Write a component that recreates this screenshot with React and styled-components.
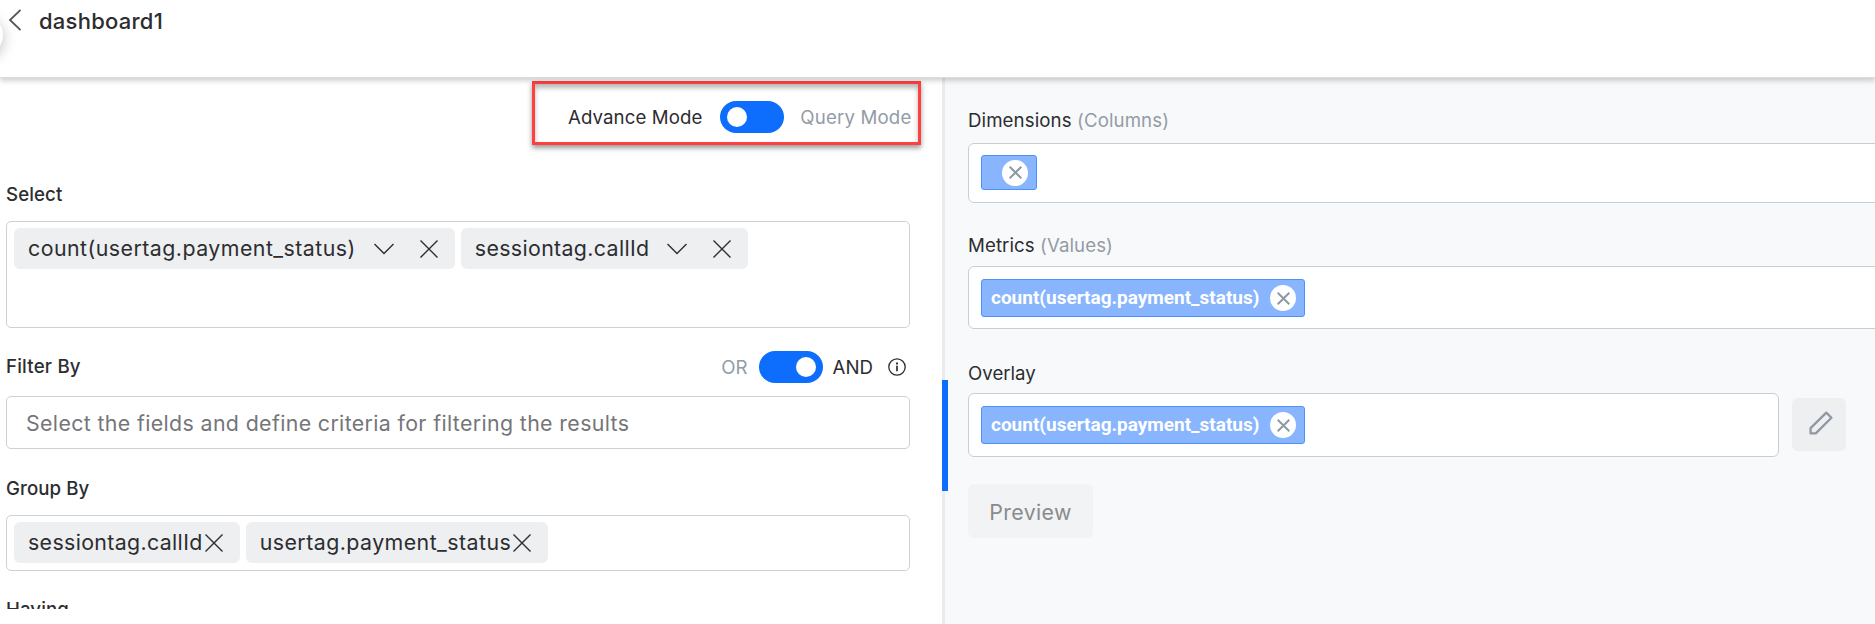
import React from "react";
import styled, { createGlobalStyle } from "styled-components";

const GlobalStyle = createGlobalStyle`
  * { box-sizing: border-box; }
  body {
    margin: 0;
    background: #fff;
    font-family: Inter, "Liberation Sans", sans-serif;
    color: #2c2d30;
    overflow: hidden;
  }
`;

const Page = styled.div`
  height: 624px;
  overflow: hidden;
  display: flex;
  flex-direction: column;
`;

const Header = styled.header`
  position: relative;
  z-index: 2;
  flex: none;
  height: 78px;
  padding: 5px 0 0 8px;
  display: flex;
  align-items: flex-start;
  gap: 18px;
  background: #fff;
  border-bottom: 1px solid #dcdcdc;
  box-shadow: 0 3px 5px rgba(0, 0, 0, 0.18);
`;

const SidebarHandle = styled.div`
  position: absolute;
  left: -37px;
  top: 15px;
  width: 40px;
  height: 40px;
  border-radius: 50%;
  background: #fff;
  box-shadow: 0 4px 14px rgba(0, 0, 0, 0.25);
`;

const Title = styled.h1`
  margin: 0;
  font-size: 22px;
  font-weight: 450;
  line-height: 32px;
  letter-spacing: 0.25px;
`;

const Body = styled.main`
  flex: 1;
  display: flex;
  min-height: 0;
`;

const QueryPanel = styled.section`
  flex: none;
  width: 942px;
  height: 531px;
  padding: 3px 32px 0 6px;
  overflow: hidden;
`;

const ModeSwitch = styled.div`
  width: 389px;
  height: 64px;
  margin: 0 -11px 0 auto;
  padding: 17px 4px 0 33px;
  display: flex;
  align-items: flex-start;
  border: 3px solid #ff4040;
  box-shadow: 0 3px 5px rgba(0, 0, 0, 0.4), inset 0 4px 5px rgba(0, 0, 0, 0.28);
`;

const Text = styled.span`
  font-size: 18.67px;
  line-height: 34px;
  letter-spacing: ${(p) => p.$spacing || 0}px;
  color: ${(p) => (p.$muted ? "#939ca5" : "inherit")};
  white-space: nowrap;
`;

const Hint = styled.span`
  color: #939ca5;
`;

const Toggle = styled.span`
  flex: none;
  display: flex;
  align-items: center;
  justify-content: ${(p) => (p.$on ? "flex-end" : "flex-start")};
  width: 64px;
  height: 32px;
  margin: ${(p) => p.$margin};
  padding: 0 7px;
  border-radius: 16px;
  background: #0d6efd;

  &::after {
    content: "";
    width: 20px;
    height: 20px;
    border-radius: 50%;
    background: #fff;
  }
`;

const FieldHead = styled.div`
  display: flex;
  align-items: center;
  height: ${(p) => p.$height || 24}px;
  margin: ${(p) => p.$margin};
`;

const Label = styled.label`
  padding-top: ${(p) => p.$drop ?? 2}px;
  font-size: 18.67px;
  font-weight: ${(p) => p.$weight || 450};
  line-height: 24px;
  letter-spacing: ${(p) => p.$spacing || 0}px;
  white-space: nowrap;
`;

const Operator = styled.div`
  display: flex;
  align-items: flex-start;
  height: 32px;
  margin-left: auto;
  padding-right: 4px;
`;

const ChipField = styled.div`
  display: flex;
  align-items: flex-start;
  gap: 6px;
  height: ${(p) => p.$height}px;
  padding: 6px 7px;
  border: 1px solid #cdd1d6;
  border-radius: 5px;
  background: #fff;
`;

const Chip = styled.span`
  display: flex;
  align-items: center;
  height: 41px;
  padding: 0 17px 0 14px;
  border-radius: 6px;
  background: #eeeff1;
  font-size: 21.33px;
  line-height: 41px;
  letter-spacing: ${(p) => p.$spacing}px;
  white-space: nowrap;
`;

const FilterInput = styled.input`
  display: block;
  width: 100%;
  height: 53px;
  padding: 0 19px;
  border: 1px solid #cdd1d6;
  border-radius: 5px;
  background: #fff;
  font: 400 21.33px Inter, "Liberation Sans", sans-serif;
  letter-spacing: 0.37px;

  &::placeholder { color: #75757a; opacity: 1; }
`;

const Icon = styled.svg`
  flex: none;
  display: block;
  margin: ${(p) => p.$margin || 0};
  fill: none;
  stroke: ${(p) => p.$color || "#2c2d30"};
`;

const ChartPanel = styled.section`
  position: relative;
  flex: 1;
  min-width: 0;
  padding: 0 0 0 23px;
  border-left: 3px solid #e9ebee;
  background: #f8f9fb;
`;

const ResizeGrip = styled.div`
  position: absolute;
  left: -3px;
  top: 302px;
  width: 6px;
  height: 111px;
  background: #0d6efd;
`;

const DropField = styled.div`
  flex: none;
  width: ${(p) => p.$width}px;
  height: ${(p) => p.$height}px;
  padding: ${(p) => p.$padTop || 12}px 12px 0;
  border: 1px solid #c9ced3;
  border-radius: 6px;
  background: #fff;
`;

const Tag = styled.span`
  display: flex;
  align-items: center;
  justify-content: space-between;
  width: ${(p) => p.$width}px;
  height: ${(p) => p.$height}px;
  padding: 0 8px 0 9px;
  border: 1px solid #4b92ff;
  border-radius: 3px;
  background: #88b5fe;
  color: #fff;
  font-family: Roboto, "Liberation Sans", sans-serif;
  font-size: 19px;
  font-weight: 700;
  line-height: 36px;
  white-space: nowrap;
`;

const TagRemove = styled.span`
  display: flex;
  align-items: center;
  justify-content: center;
  width: 26px;
  height: 26px;
  margin-left: auto;
  border-radius: 50%;
  background: #fff;
`;

const OverlayRow = styled.div`
  display: flex;
  align-items: flex-start;
  gap: 13px;
`;

const EditButton = styled.button`
  display: flex;
  align-items: center;
  justify-content: center;
  width: 54px;
  height: 53px;
  margin-top: 5px;
  padding: 0 0 4px 3px;
  border: 0;
  border-radius: 6px;
  background: #eeeff1;
`;

const PreviewButton = styled.button`
  width: 125px;
  height: 54px;
  margin-top: 27px;
  padding: 1px 0 0;
  border: 0;
  border-radius: 6px;
  background: #f2f3f4;
  color: #8a8b8d;
  font: 400 21.33px/54px Inter, "Liberation Sans", sans-serif;
  letter-spacing: 0.35px;
`;

const Chevron = () => (
  <Icon $margin="0 26px 0 18px" width="20" height="12" viewBox="0 0 20 12" strokeWidth="1.4">
    <path d="M.5 1 10 10.5 19.5 1" />
  </Icon>
);

const Cross = ({ margin }) => (
  <Icon $margin={margin} width="18" height="18" viewBox="0 0 18 18" strokeWidth="1.4">
    <path d="M.5.5l17 17M17.5.5l-17 17" />
  </Icon>
);

const FieldChip = ({ name, spacing, menu }) => (
  <Chip $spacing={spacing}>
    {name}
    {menu && <Chevron />}
    <Cross margin={menu ? "0" : "0 0 0 2px"} />
  </Chip>
);

const FieldTag = ({ name, width, height = 38 }) => (
  <Tag $width={width} $height={height}>
    {name}
    <TagRemove>
      <Icon width="13" height="13" viewBox="0 0 13 13" $color="#8f99a3" strokeWidth="2">
        <path d="M.7.7l11.6 11.6M12.3.7.7 12.3" />
      </Icon>
    </TagRemove>
  </Tag>
);

export default function App() {
  return (
    <>
      <GlobalStyle />
      <Page>
        <Header>
          <SidebarHandle />
          <Icon $margin="4px 0 0" width="13" height="22" viewBox="0 0 13 22" $color="#55575b" strokeWidth="1.8">
            <path d="M12.5 1 2 11l10.5 10" />
          </Icon>
          <Title>dashboard1</Title>
        </Header>
        <Body>
          <QueryPanel>
            <ModeSwitch>
              <Text $spacing={0.08}>Advance Mode</Text>
              <Toggle $margin="0 16px 0 18px" />
              <Text $muted $spacing={0.15}>Query Mode</Text>
            </ModeSwitch>

            <FieldHead $margin="37px 0 15px">
              <Label $spacing={0.1}>Select</Label>
            </FieldHead>
            <ChipField $height={107}>
              <FieldChip menu name="count(usertag.payment_status)" spacing={0.47} />
              <FieldChip menu name="sessiontag.callId" spacing={0.36} />
            </ChipField>

            <FieldHead $height={32} $margin="23px 0 13px">
              <Label $drop={0} $spacing={0.2}>Filter By</Label>
              <Operator>
                <Text $muted>OR</Text>
                <Toggle $on $margin="0 10px 0 11px" />
                <Text>AND</Text>
                <Icon $margin="7px 0 0 15px" width="18" height="18" viewBox="0 0 18 18" strokeWidth="1.3">
                  <circle cx="9" cy="9" r="8.2" />
                  <path d="M9 7.7v5.5" strokeWidth="1.7" />
                  <path d="M9 4.5v1.9" strokeWidth="1.9" />
                </Icon>
              </Operator>
            </FieldHead>
            <FilterInput placeholder="Select the fields and define criteria for filtering the results" />

            <FieldHead $margin="27px 0 15px">
              <Label $spacing={0.08}>Group By</Label>
            </FieldHead>
            <ChipField $height={56}>
              <FieldChip name="sessiontag.callId" spacing={0.36} />
              <FieldChip name="usertag.payment_status" spacing={0.46} />
            </ChipField>

            <FieldHead $margin="26px 0 0">
              <Label $spacing={0.08}>Having</Label>
            </FieldHead>
          </QueryPanel>

          <ChartPanel>
            <ResizeGrip />
            <FieldHead $margin="30px 0 11px">
              <Label $weight={400} $spacing={0.1}>
                Dimensions <Hint>(Columns)</Hint>
              </Label>
            </FieldHead>
            <DropField $width={920} $height={60} $padTop={11}>
              <FieldTag width={56} height={35} />
            </DropField>

            <FieldHead $margin="30px 0 9px">
              <Label $weight={400} $spacing={0.08}>
                Metrics <Hint>(Values)</Hint>
              </Label>
            </FieldHead>
            <DropField $width={920} $height={63}>
              <FieldTag name="count(usertag.payment_status)" width={324} />
            </DropField>

            <FieldHead $margin="32px 0 8px">
              <Label $drop={1} $weight={400}>Overlay</Label>
            </FieldHead>
            <OverlayRow>
              <DropField $width={811} $height={64}>
                <FieldTag name="count(usertag.payment_status)" width={324} />
              </DropField>
              <EditButton>
                <Icon width="24" height="24" viewBox="0 0 24 24" $color="#8f99a3" strokeWidth="2.3">
                  <path d="M1.6 22.4v-5.300L17.300 1.600l5.100 5.100L6.800 22.400z" strokeLinejoin="round" />
                </Icon>
              </EditButton>
            </OverlayRow>
            <PreviewButton>Preview</PreviewButton>
          </ChartPanel>
        </Body>
      </Page>
    </>
  );
}
